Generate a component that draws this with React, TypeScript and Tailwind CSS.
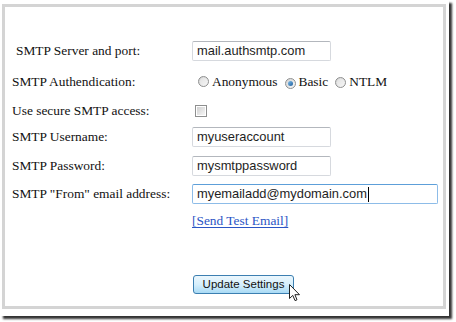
import React from "react";

const serif = { fontFamily: '"Liberation Serif", "Times New Roman", serif' };
const sans = { fontFamily: '"Liberation Sans", Arial, sans-serif' };

function Radio({ checked }: { checked?: boolean }) {
  return (
    <span className="relative inline-flex h-[11px] w-[11px] shrink-0 items-center justify-center rounded-full border border-[#8e8f8f] bg-linear-to-br from-[#d2d2d2] to-[#fbfbfb]">
      {checked ? (
        <span className="h-[5px] w-[5px] rounded-full bg-linear-to-br from-[#7fc0ee] to-[#1d5d9a]" />
      ) : (
        <span className="h-[7px] w-[7px] rounded-full bg-linear-to-br from-[#e2e2e2] to-[#f4f4f4]" />
      )}
    </span>
  );
}

function TextInput({ value, width, focused }: { value: string; width: string; focused?: boolean }) {
  return (
    <div
      className={
        "flex h-[20px] items-center rounded-[2px] border pl-[4px] text-[12.9px] text-[#1e1e1e] " +
        width +
        (focused
          ? " border-[#8dbce8] border-t-[#5d9fd9]"
          : " border-[#d6d9de] border-t-[#b3b7bd]")
      }
      style={sans}
    >
      <span>{value}</span>
      {focused && <span className="ml-px h-[15px] w-px bg-black" />}
    </div>
  );
}

function Row({ label, h, children, indent }: { label: string; h: string; children?: React.ReactNode; indent?: boolean }) {
  return (
    <div className={"flex items-center " + h}>
      <div className={"w-[180px] shrink-0 text-[13.4px] text-[#111]" + (indent ? " pl-[4px]" : "")} style={serif}>
        {label}
      </div>
      <div className="flex items-center">{children}</div>
    </div>
  );
}

export default function App() {
  return (
    <div className="relative h-[322px] w-[456px] overflow-hidden bg-white">
      <div className="h-[316px] w-[449px] bg-white pl-[2px] pt-[4px] shadow-[3px_3px_2px_rgba(0,0,0,0.8)]">
        <div className="h-[305px] w-[444px] border-[3px] border-[#d4d4d4] pl-[7px] pt-[32px]">
          <Row label="SMTP Server and port:" h="h-[24px]" indent>
            <TextInput value="mail.authsmtp.com" width="w-[139px]" />
          </Row>
          <Row label="SMTP Authendication:" h="h-[38px]">
            <div className="flex items-center pl-[6px] text-[13.4px] text-[#111]" style={serif}>
              <Radio />
              <span className="ml-[3px]">Anonymous</span>
              <span className="ml-[8px]"><Radio checked /></span>
              <span className="ml-[2px]">Basic</span>
              <span className="ml-[7px]"><Radio /></span>
              <span className="ml-[3px]">NTLM</span>
            </div>
          </Row>
          <Row label="Use secure SMTP access:" h="h-[20px]">
            <span className="ml-[3px] flex h-[12px] w-[12px] items-center justify-center border border-[#8e8f8f] bg-white">
              <span className="h-[8px] w-[8px] bg-linear-to-br from-[#d0d0d0] to-[#f6f6f6]" />
            </span>
          </Row>
          <Row label="SMTP Username:" h="h-[32px]">
            <TextInput value="myuseraccount" width="w-[139px]" />
          </Row>
          <Row label="SMTP Password:" h="h-[26px]">
            <TextInput value="mysmtppassword" width="w-[139px]" />
          </Row>
          <Row label={'SMTP "From" email address:'} h="h-[30px]">
            <TextInput value="myemailadd@mydomain.com" width="w-[246px]" focused />
          </Row>
          <div className="flex h-[24px] items-center pl-[180px]">
            <span className="text-[13.4px] text-[#2b55c5] underline decoration-1 underline-offset-2" style={serif}>
              [Send Test Email]
            </span>
          </div>
          <div className="mt-[42px] pl-[181px]">
            <div
              className="flex h-[19px] w-[101px] items-center justify-center rounded-[3px] border border-[#3c7fb1] bg-linear-to-b from-[#ecf7fd] via-[#d6effc] to-[#a9daf5] text-[11.5px] text-[#111]"
              style={sans}
            >
              Update Settings
            </div>
          </div>
        </div>
      </div>
      <svg className="absolute left-[289px] top-[284px]" width="12" height="18" viewBox="0 0 12 18">
        <path d="M0.5 0.5 L0.5 14.5 L3.8 11.4 L6 16.6 L8 15.8 L5.9 10.7 L10.5 10.7 Z" fill="white" stroke="#222" strokeWidth="1" strokeLinejoin="round" />
      </svg>
    </div>
  );
}
